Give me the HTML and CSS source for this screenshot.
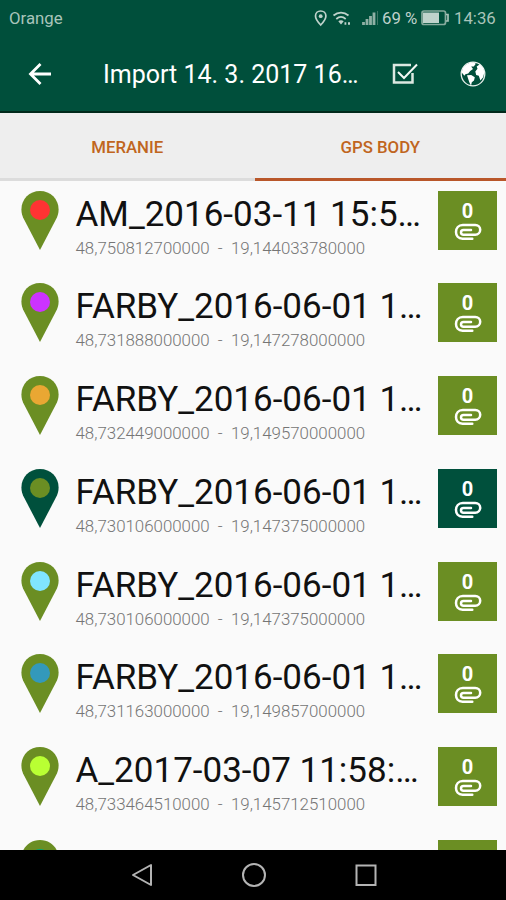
FILE: index.html
```html
<!DOCTYPE html>
<html lang="sk">
<head>
    <meta charset="UTF-8">
    <meta name="viewport" content="width=device-width, initial-scale=1.0">
    <title>Import</title>
    <link rel="stylesheet" href="styles.css">
</head>
<body>
    <!-- Shared icons -->
    <svg class="sprite">
        <symbol id="pin" viewBox="0 0 38 59">
            <path d="M19 0C8.5 0 .4 8 .4 18.400c0 3.800 1 6.800 2.700 10.200L19 59l15.900-30.400c1.700-3.400 2.700-6.400 2.700-10.200C37.600 8 29.500 0 19 0z" fill="currentColor"/>
        </symbol>
        <symbol id="clip" viewBox="0 0 28 18">
            <path d="M18.300 15.700H8.500C4.300 15.700 2 12.700 2 9s2.500-7 6.800-7h12.400c3 0 5 2.200 5 4.700s-2 5-5 5H9.500c-1.600 0-2.500-1-2.500-2.300s.9-2.300 2.500-2.300h7.500" fill="none" stroke="#fff" stroke-width="2.500" stroke-linecap="round"/>
        </symbol>
    </svg>

    <div class="screen">
        <div class="status-bar">
            <span class="carrier">Orange</span>
            <svg class="status-icons" width="66" height="18" viewBox="0 0 66 18">
                <path d="M7.700 2C4.700 2 2.500 4.200 2.500 7c0 3.600 5.200 9 5.200 9s5.200-5.400 5.200-9c0-2.800-2.200-5-5.200-5z" fill="none" stroke="#bfd2cb" stroke-width="1.700"/>
                <circle cx="7.700" cy="7.200" r="1.900" fill="#bfd2cb"/>
                <path d="M20.500 6.500c4.500-3.800 10.500-3.800 15 0M23.300 10c2.800-2.400 6.600-2.400 9.400 0" fill="none" stroke="#bfd2cb" stroke-width="1.700"/>
                <path d="M25.300 12.300c1.600-1.300 3.800-1.300 5.400 0L28 15.500z" fill="#bfd2cb"/>
                <path d="M31.500 14.500h1.800M35 14.500h2" stroke="#bfd2cb" stroke-width="2.400"/>
                <path d="M50.500 16v-3M54 16V10M57.500 16V7M61 16V3.500" stroke="#8fb0a5" stroke-width="2.800"/>
                <path d="M64.500 16V2" stroke="#3f7767" stroke-width="1"/>
            </svg>
            <span class="battery-level">69 %</span>
            <svg class="battery" width="29" height="16" viewBox="0 0 29 16">
                <rect x="1" y="1" width="23.500" height="13.500" rx="2" fill="none" stroke="#86aa9d" stroke-width="1.700"/>
                <rect x="2" y="2.500" width="16" height="10.500" fill="#bfd2cb"/>
                <path d="M25 4.500h2v6.500h-2" fill="none" stroke="#a8c1b8" stroke-width="1.700"/>
            </svg>
            <span class="clock">14:36</span>
        </div>

        <header class="toolbar">
            <svg class="back" width="26" height="24" viewBox="0 0 26 24">
                <path d="M24 12H4M13.500 2L3.500 12l10 10" fill="none" stroke="#fff" stroke-width="2.800"/>
            </svg>
            <h1 class="title">Import 14. 3. 2017 16…</h1>
            <svg class="check" width="28" height="24" viewBox="0 0 28 24">
                <path d="M20 3H3v17.500h18.500V11" fill="none" stroke="#dce8e1" stroke-width="2.500"/>
                <path d="M7 10l6 6L26 2.500" fill="none" stroke="#f4f8f5" stroke-width="2"/>
            </svg>
            <svg class="globe" width="26" height="26" viewBox="0 0 26 26">
                <circle cx="13" cy="13" r="11.800" fill="none" stroke="#e8f0ec" stroke-width="1.300"/>
                <path d="M2.500 8C4.500 4 8.500 1.300 13.500 1.200l2.300 1.600-2 2.600-2.600.2 1.800 2.300-2.800 2-2 2.600-2.800.7-1 1.600-2.700-3.200z" fill="#fff"/>
                <path d="M7 14.300l4.200-.4 3.600 2.400-.8 3.200-2.200 1.800-.8 3.500-1.700-3.600z" fill="#fff"/>
                <path d="M16.700 5.500l3.200-2.300 3.600 4 .8 4.300-1.100 4.700-2.800 3.400-1.600-4.800-2.600-.8-.9-3.600 2.200-2.700z" fill="#fff"/>
            </svg>
        </header>

        <nav class="tabs">
            <div class="tab">MERANIE</div>
            <div class="tab active">GPS BODY</div>
        </nav>

        <main class="list">
            <div class="row">
                <div class="marker red"><svg><use href="#pin"/></svg></div>
                <div class="info">
                    <div class="name">AM_2016-03-11 15:5…</div>
                    <div class="coords">48,750812700000&nbsp; -&nbsp; 19,144033780000</div>
                </div>
                <div class="attachments"><span>0</span><svg><use href="#clip"/></svg></div>
            </div>
            <div class="row">
                <div class="marker purple"><svg><use href="#pin"/></svg></div>
                <div class="info">
                    <div class="name">FARBY_2016-06-01 1…</div>
                    <div class="coords">48,731888000000&nbsp; -&nbsp; 19,147278000000</div>
                </div>
                <div class="attachments"><span>0</span><svg><use href="#clip"/></svg></div>
            </div>
            <div class="row">
                <div class="marker orange"><svg><use href="#pin"/></svg></div>
                <div class="info">
                    <div class="name">FARBY_2016-06-01 1…</div>
                    <div class="coords">48,732449000000&nbsp; -&nbsp; 19,149570000000</div>
                </div>
                <div class="attachments"><span>0</span><svg><use href="#clip"/></svg></div>
            </div>
            <div class="row selected">
                <div class="marker olive"><svg><use href="#pin"/></svg></div>
                <div class="info">
                    <div class="name">FARBY_2016-06-01 1…</div>
                    <div class="coords">48,730106000000&nbsp; -&nbsp; 19,147375000000</div>
                </div>
                <div class="attachments"><span>0</span><svg><use href="#clip"/></svg></div>
            </div>
            <div class="row">
                <div class="marker sky"><svg><use href="#pin"/></svg></div>
                <div class="info">
                    <div class="name">FARBY_2016-06-01 1…</div>
                    <div class="coords">48,730106000000&nbsp; -&nbsp; 19,147375000000</div>
                </div>
                <div class="attachments"><span>0</span><svg><use href="#clip"/></svg></div>
            </div>
            <div class="row">
                <div class="marker blue"><svg><use href="#pin"/></svg></div>
                <div class="info">
                    <div class="name">FARBY_2016-06-01 1…</div>
                    <div class="coords">48,731163000000&nbsp; -&nbsp; 19,149857000000</div>
                </div>
                <div class="attachments"><span>0</span><svg><use href="#clip"/></svg></div>
            </div>
            <div class="row">
                <div class="marker lime"><svg><use href="#pin"/></svg></div>
                <div class="info">
                    <div class="name">A_2017-03-07 11:58:…</div>
                    <div class="coords">48,733464510000&nbsp; -&nbsp; 19,145712510000</div>
                </div>
                <div class="attachments"><span>0</span><svg><use href="#clip"/></svg></div>
            </div>
            <div class="row">
                <div class="marker teal"><svg><use href="#pin"/></svg></div>
                <div class="info">
                    <div class="name">A_2017-03-07 12:01:…</div>
                </div>
                <div class="attachments"></div>
            </div>
        </main>

        <footer class="nav-bar">
            <svg width="24" height="26" viewBox="0 0 24 26">
                <path d="M21 3v20L3 13z" fill="none" stroke="#b4b4b4" stroke-width="2" stroke-linejoin="round"/>
            </svg>
            <svg width="26" height="26" viewBox="0 0 26 26">
                <circle cx="13" cy="13" r="11" fill="none" stroke="#b4b4b4" stroke-width="2"/>
            </svg>
            <svg width="24" height="26" viewBox="0 0 24 26">
                <rect x="2.500" y="3.500" width="19" height="19.500" fill="none" stroke="#b4b4b4" stroke-width="2"/>
            </svg>
        </footer>
    </div>
</body>
</html>
```
FILE: styles.css
```css
* {
    margin: 0;
    padding: 0;
    box-sizing: border-box;
}

body {
    font-family: Roboto, 'Liberation Sans', sans-serif;
    background-color: #fafafa;
}

svg {
    display: block;
    flex-shrink: 0;
}

.sprite {
    display: none;
}

.screen {
    display: flex;
    flex-direction: column;
    width: 506px;
    height: 900px;
    overflow: hidden;
}

/* Status bar */
.status-bar {
    display: flex;
    align-items: center;
    height: 36px;
    padding: 0 10px 0 9px;
    background-color: #004f3b;
    color: #a9c4ba;
    font-size: 16.800px;
    white-space: nowrap;
}

.status-icons {
    margin-left: auto;
}

.battery-level {
    width: 36px;
    margin-left: 3px;
    color: #bfd2cb;
}

.battery {
    margin: 0 4px 0 3px;
}

.clock {
    width: 42px;
}

/* Toolbar */
.toolbar {
    display: flex;
    align-items: center;
    height: 77px;
    padding: 0 20px 0 27px;
    background-color: #004f3b;
    border-bottom: 2px solid #00291b;
}

.title {
    width: 260px;
    margin-left: 50px;
    padding-top: 1px;
    color: #fff;
    font-size: 25px;
    font-weight: 400;
    white-space: nowrap;
}

.check {
    margin-left: 28px;
}

.globe {
    margin-left: auto;
}

/* Tabs */
.tabs {
    display: flex;
    height: 68px;
    background-color: #eee;
}

.tab {
    width: 254.500px;
    border-bottom: 3px solid #dcdcdc;
    color: #c06520;
    font-size: 16.800px;
    font-weight: 500;
    line-height: 69px;
    text-align: center;
}

.tab.active {
    width: 251.500px;
    border-bottom-color: #b9572a;
}

/* GPS points */
.list {
    flex: 1;
    min-height: 0;
    overflow: hidden;
    padding-top: 9.500px;
    background-color: #fafafa;
}

.row {
    display: flex;
    height: 92.800px;
    padding: 0 9px 0 21px;
    color: #6b8e23;
}

.row.selected {
    color: #00503c;
}

.marker {
    display: grid;
    width: 38px;
    height: 59px;
}

.marker svg,
.marker::after {
    grid-area: 1 / 1;
}

.marker svg {
    width: 38px;
    height: 59px;
}

.marker::after {
    content: "";
    justify-self: center;
    width: 20px;
    height: 20px;
    margin-top: 9px;
    border-radius: 50%;
    background-color: var(--dot);
    z-index: 1;
}

.red { --dot: #ff3333; }
.purple { --dot: #cc33ff; }
.orange { --dot: #e9a733; }
.olive { --dot: #6b8e23; }
.sky { --dot: #80e5ff; }
.blue { --dot: #3399bb; }
.lime { --dot: #b9ff33; }
.teal { --dot: #00a878; }

.info {
    width: 362px;
    padding-left: 16.500px;
    white-space: nowrap;
}

.name {
    height: 47px;
    color: #111;
    font-size: 35px;
    line-height: 47px;
}

.coords {
    color: #757575;
    font-size: 16.870px;
    font-weight: 300;
    line-height: 20px;
}

.attachments {
    display: flex;
    flex-direction: column;
    align-items: center;
    width: 59px;
    height: 59px;
    margin-left: auto;
    padding-top: 9px;
    background-color: currentColor;
}

.attachments span {
    color: #fff;
    font-size: 20px;
    font-weight: 700;
    line-height: 22px;
}

.attachments svg {
    width: 28px;
    height: 18px;
    margin-top: 1px;
}

/* Android navigation */
.nav-bar {
    display: flex;
    justify-content: center;
    align-items: center;
    gap: 87px;
    height: 50px;
    padding-left: 1px;
    background-color: #000;
}
```
